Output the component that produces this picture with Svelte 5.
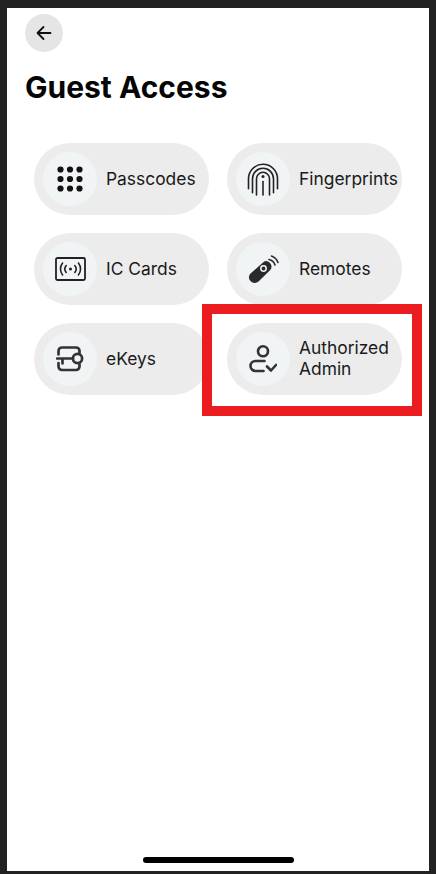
<!-- script -->
<script>
  /* access options, left to right */
  const items = [
    { id: 'passcodes', label: 'Passcodes' },
    { id: 'fingerprints', label: 'Fingerprints' },
    { id: 'cards', label: 'IC Cards' },
    { id: 'remotes', label: 'Remotes' },
    { id: 'ekeys', label: 'eKeys' },
    { id: 'admin', label: 'Authorized Admin', marked: true }
  ]
</script>

<!-- template -->
<div class="frame">
  <div class="screen">
    <button class="back" aria-label="Back">
      <svg width="18" height="18" viewBox="0 0 18 18" fill="none" stroke="#111" stroke-width="1.8" stroke-linecap="round" stroke-linejoin="round">
        <path d="M15.5 9H2.5M8.5 3L2.5 9l6 6" />
      </svg>
    </button>

    <h1>Guest Access</h1>

    <div class="grid">
      {#each items as item}
        <div class="pill">
          {#if item.marked}<div class="marker"></div>{/if}
          <div class="icon">
            {#if item.id === 'passcodes'}
              <svg width="28" height="28" viewBox="0 0 28 28" fill="#111">
                {#each [4.5, 14, 23.5] as cy}
                  {#each [4.5, 14, 23.5] as cx}
                    <circle {cx} {cy} r="3.1" />
                  {/each}
                {/each}
              </svg>
            {:else if item.id === 'fingerprints'}
              <svg width="32" height="33" viewBox="0 0 32 33" fill="none" stroke="#222" stroke-width="1.6" stroke-linecap="round">
                <path d="M1.5 25.7V15.8a14.5 14.5 0 0 1 29 0V25.7" />
                <path d="M5.5 29.7V15.8a10.5 10.5 0 0 1 21 0V29.7" />
                <path d="M9.5 32V15.8a6.5 6.5 0 0 1 13 0V32" />
                <circle cx="16" cy="13.5" r="1.5" fill="#222" stroke="none" />
                <path d="M16 18.5V32" />
              </svg>
            {:else if item.id === 'cards'}
              <svg width="31" height="24" viewBox="0 0 31 24" fill="none" stroke="#222" stroke-linecap="round">
                <rect x="1" y="1" width="29" height="22" rx="1.5" stroke-width="1.8" />
                <circle cx="15.5" cy="12" r="1.5" fill="#222" stroke="none" />
                <path d="M11.2 8.5a5.5 5.5 0 0 0 0 7M19.8 8.5a5.5 5.5 0 0 1 0 7M7.6 6a9.5 9.5 0 0 0 0 12M23.4 6a9.5 9.5 0 0 1 0 12" stroke-width="1.6" />
              </svg>
            {:else if item.id === 'remotes'}
              <svg width="31" height="30" viewBox="0 0 31 30">
                <path d="M2.5 19.5L15 8.5a5 5 0 0 1 6.8.3l.4.4a5 5 0 0 1-.2 7L10.5 27.5a5.6 5.6 0 0 1-7.8-.2l-.4-.5a5.2 5.2 0 0 1 .2-7.3z" fill="#2a2a2a" />
                <circle cx="15.5" cy="14.5" r="2.7" fill="none" stroke="#f1f4f5" stroke-width="1.5" />
                <path d="M21 5.5a8 8 0 0 1 6 5.5M23.5 2a11 11 0 0 1 6.5 6.5" fill="none" stroke="#2a2a2a" stroke-width="1.6" stroke-linecap="round" />
              </svg>
            {:else if item.id === 'ekeys'}
              <svg width="28" height="26" viewBox="0 0 28 26" fill="none" stroke="#333" stroke-width="2.7" stroke-linecap="round" stroke-linejoin="round">
                <path d="M2.5 8.5V5a3.5 3.5 0 0 1 3.5-3.5h14A3.5 3.5 0 0 1 23.5 5v2" />
                <path d="M2.5 17v3.5A3.5 3.5 0 0 0 6 24h14a3.5 3.5 0 0 0 3.5-3.5V18" />
                <circle cx="21.5" cy="12.5" r="4.6" />
                <path d="M1.2 12.5H17M6.5 12.5v5" />
              </svg>
            {:else}
              <svg width="28" height="28" viewBox="0 0 28 28" fill="none" stroke="#333" stroke-width="2.6" stroke-linecap="round" stroke-linejoin="round">
                <circle cx="14" cy="6.3" r="5" />
                <path d="M15.5 16H6.5a5 5 0 0 0 0 10h8" />
                <path d="M18 21.5l4 4L27 20" />
              </svg>
            {/if}
          </div>
          <span class="label">{item.label}</span>
        </div>
      {/each}
    </div>

    <div class="spacer"></div>
    <div class="home"></div>
  </div>
</div>

<!-- styles -->
<style>
  :global(body) {
    background: #222222;
  }

  /* containers */
  .frame {
    width: 436px;
    height: 874px;
    box-sizing: border-box;
    padding: 8px 7px 3px 7px;
    background: #222222;
    overflow: hidden;
  }
  .screen {
    height: 100%;
    box-sizing: border-box;
    padding: 6px 18px 8px 18px;
    background: #ffffff;
    display: flex;
    flex-direction: column;
    font-family: Inter, "Liberation Sans", sans-serif;
  }

  /* header */
  .back {
    width: 38px;
    height: 38px;
    padding: 0;
    border: none;
    border-radius: 50%;
    background: #e5e5e5;
    display: flex;
    align-items: center;
    justify-content: center;
  }
  h1 {
    margin: 15px 0 0 0;
    font-size: 30px;
    line-height: 40px;
    font-weight: 700;
    color: #050505;
    letter-spacing: 0;
  }

  /* options */
  .grid {
    margin: 36px 0 0 9px;
    display: grid;
    grid-template-columns: 175px 175px;
    grid-auto-rows: 72px;
    column-gap: 18px;
    row-gap: 18px;
  }
  .pill {
    position: relative;
    display: flex;
    align-items: center;
    gap: 9px;
    padding-left: 9px;
    border-radius: 36px;
    background: #ececec;
  }
  .icon {
    flex: none;
    width: 54px;
    height: 54px;
    border-radius: 50%;
    background: #f1f4f5;
    display: flex;
    align-items: center;
    justify-content: center;
  }
  .label {
    margin-bottom: 2px;
    font-size: 17.4px;
    line-height: 21px;
    font-weight: 400;
    color: #1a1a1a;
  }
  .marker {
    position: absolute;
    left: -25px;
    top: -19px;
    width: 200px;
    height: 92px;
    border: 10px solid #ea1c20;
    pointer-events: none;
  }

  /* bottom */
  .spacer {
    flex: 1;
  }
  .home {
    align-self: center;
    margin-left: 1px;
    width: 151px;
    height: 6px;
    border-radius: 3px;
    background: #000000;
  }
</style>
